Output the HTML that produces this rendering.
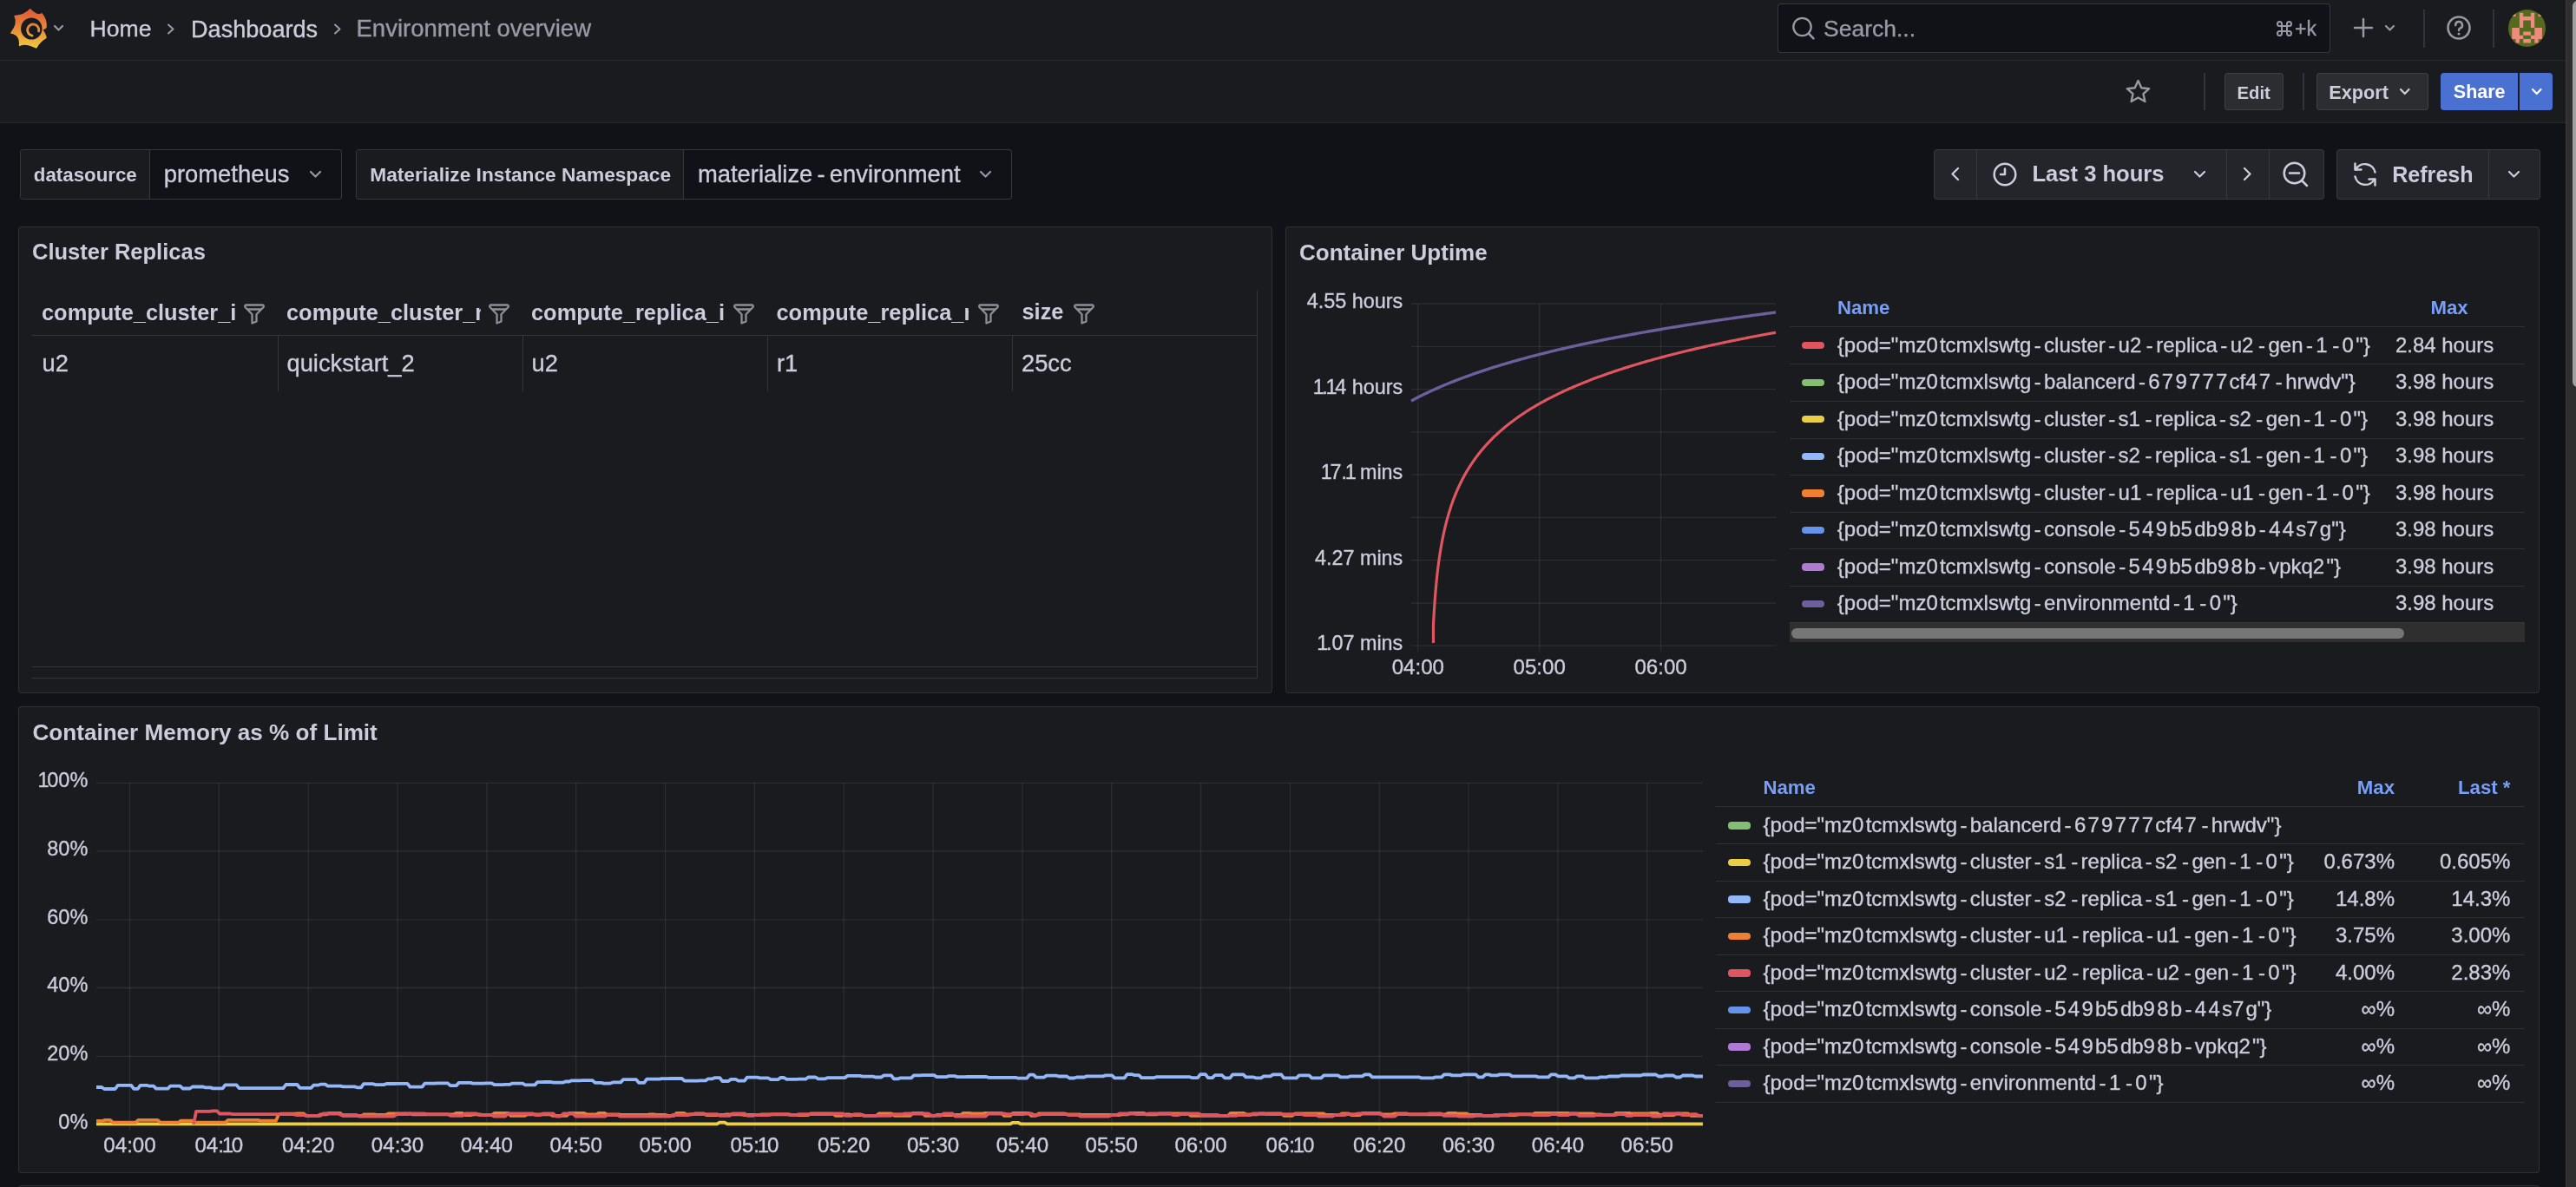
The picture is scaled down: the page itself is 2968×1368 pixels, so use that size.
<!DOCTYPE html>
<html><head><meta charset="utf-8"><title>Environment overview - Dashboards - Grafana</title>
<style>
html,body{margin:0;padding:0;width:2968px;height:1368px;overflow:hidden;background:#111217;font-family:"Liberation Sans",sans-serif;}
.r{-webkit-text-stroke:0.35px currentColor;}
</style></head><body>
<div style="position:absolute;left:0;top:0;width:2968px;height:1368px;overflow:hidden;will-change:transform;background:#111217">
<div style="position:absolute;left:0px;top:0px;width:2956px;height:69px;background:#191b1f"></div>
<div style="position:absolute;left:0px;top:69px;width:2956px;height:1px;background:rgba(204,204,220,0.12)"></div>
<div style="position:absolute;left:0px;top:70px;width:2956px;height:71px;background:#191b1f"></div>
<div style="position:absolute;left:0px;top:141px;width:2956px;height:1px;background:rgba(204,204,220,0.12)"></div>
<svg style="position:absolute;left:0px;top:0px;overflow:visible;" width="70" height="70" viewBox="0 0 70 70"><defs><linearGradient id="lg" gradientUnits="userSpaceOnUse" x1="0" y1="11" x2="0" y2="55"><stop offset="0" stop-color="#df5a37"/><stop offset="0.5" stop-color="#e78a3a"/><stop offset="1" stop-color="#f0c940"/></linearGradient></defs>
<path d="M34.8 10.8 Q42.80 19.30 48.00 15.80 Q53.90 23.15 53.00 31.50 L48.3 34.6 Q51.35 37.25 53.00 43.30 Q44.85 48.50 41.70 54.90 Q29.25 48.75 22.60 52.40 Q24.00 40.00 13.00 38.00 Q21.55 27.15 17.10 18.50 Q28.05 18.15 34.80 10.80 Z" fill="url(#lg)" stroke="url(#lg)" stroke-width="1.6" stroke-linejoin="round"/>
<ellipse cx="36.3" cy="33" rx="12.2" ry="12.6" fill="#191b1f"/>
<path d="M37.05 41.10 A6.6 6.6 0 1 1 44.70 35.75" fill="none" stroke="url(#lg)" stroke-width="2.9" stroke-linecap="round"/></svg>
<svg style="position:absolute;left:62.3px;top:29.25px;overflow:visible;" width="11" height="6.5" viewBox="0 0 11 6.5"><path d="M1 1 L5.5 5.5 L10 1" fill="none" stroke="#9899a6" stroke-width="2.2" stroke-linecap="round" stroke-linejoin="round"/></svg>
<div class="r" style="position:absolute;top:19.99px;font-size:26.6px;line-height:26.6px;color:#ccccdc;font-weight:normal;white-space:nowrap;left:103.50px">Home</div>
<svg style="position:absolute;left:192px;top:27px;overflow:visible;" width="10" height="13" viewBox="0 0 10 13"><path d="M2 1.5 L7.5 6.5 L2 11.5" fill="none" stroke="#9899a6" stroke-width="2" stroke-linecap="round" stroke-linejoin="round"/></svg>
<div class="r" style="position:absolute;top:19.57px;font-size:27.1px;line-height:27.1px;color:#ccccdc;font-weight:normal;white-space:nowrap;left:220.00px">Dashboards</div>
<svg style="position:absolute;left:384px;top:27px;overflow:visible;" width="10" height="13" viewBox="0 0 10 13"><path d="M2 1.5 L7.5 6.5 L2 11.5" fill="none" stroke="#9899a6" stroke-width="2" stroke-linecap="round" stroke-linejoin="round"/></svg>
<div class="r" style="position:absolute;top:19.23px;font-size:27.5px;line-height:27.5px;color:#9899a6;font-weight:normal;white-space:nowrap;left:410.50px">Environment overview</div>
<div style="position:absolute;left:2048px;top:4px;width:637px;height:57px;background:#111217;border:1px solid rgba(204,204,220,0.20);border-radius:4px;box-sizing:border-box"></div>
<svg style="position:absolute;left:2064px;top:19px;overflow:visible;" width="28" height="28" viewBox="0 0 28 28"><circle cx="12.5" cy="12" r="10.2" fill="none" stroke="#9899a6" stroke-width="2.3"/><path d="M19.8 19.5 L25.5 25.3" stroke="#9899a6" stroke-width="2.5" stroke-linecap="round"/></svg>
<div class="r" style="position:absolute;top:19.98px;font-size:26.5px;line-height:26.5px;color:#9899a6;font-weight:normal;white-space:nowrap;left:2101.00px">Search...</div>
<svg style="position:absolute;left:2623px;top:24px;overflow:visible;" width="18" height="18" viewBox="0 0 18 18"><g fill="none" stroke="#9899a6" stroke-width="2"><path d="M6 6 H12 V12 H6 Z"/><path d="M6 6 V3.5 A2.5 2.5 0 1 0 3.5 6 H6"/><path d="M12 6 V3.5 A2.5 2.5 0 1 1 14.5 6 H12"/><path d="M6 12 V14.5 A2.5 2.5 0 1 1 3.5 12 H6"/><path d="M12 12 V14.5 A2.5 2.5 0 1 0 14.5 12 H12"/></g></svg>
<div class="r" style="position:absolute;top:21.85px;font-size:23px;line-height:23px;color:#9899a6;font-weight:normal;white-space:nowrap;left:2644.00px">+k</div>
<svg style="position:absolute;left:2711px;top:20px;overflow:visible;" width="24" height="24" viewBox="0 0 24 24"><path d="M12 2 V22 M2 12 H22" stroke="#9899a6" stroke-width="2.5" stroke-linecap="round"/></svg>
<svg style="position:absolute;left:2748.0px;top:29.25px;overflow:visible;" width="11" height="6.5" viewBox="0 0 11 6.5"><path d="M1 1 L5.5 5.5 L10 1" fill="none" stroke="#9899a6" stroke-width="2.2" stroke-linecap="round" stroke-linejoin="round"/></svg>
<div style="position:absolute;left:2792px;top:11px;width:2px;height:44px;background:rgba(204,204,220,0.15)"></div>
<svg style="position:absolute;left:2819px;top:18px;overflow:visible;" width="28" height="28" viewBox="0 0 28 28"><circle cx="14" cy="14" r="12.5" fill="none" stroke="#9899a6" stroke-width="2.6"/><path d="M10.2 11.2 A3.9 3.9 0 1 1 15.4 14.6 C14.3 15.1 14 15.8 14 17" fill="none" stroke="#9899a6" stroke-width="2.5" stroke-linecap="round"/><circle cx="14" cy="21" r="1.5" fill="#9899a6"/></svg>
<div style="position:absolute;left:2872px;top:11px;width:2px;height:44px;background:rgba(204,204,220,0.15)"></div>
<svg style="position:absolute;left:2890px;top:11px;overflow:visible;" width="43" height="43" viewBox="0 0 43 43"><defs><clipPath id="av"><circle cx="21.5" cy="21.5" r="21.5"/></clipPath></defs><g clip-path="url(#av)"><rect width="43" height="43" fill="#55691f"/><path d="M4.20 3.70h4.34v4.34h-4.34ZM12.88 3.70h4.34v4.34h-4.34ZM25.90 3.70h4.34v4.34h-4.34ZM34.58 3.70h4.34v4.34h-4.34ZM12.88 8.04h4.34v4.34h-4.34ZM17.22 8.04h4.34v4.34h-4.34ZM21.56 8.04h4.34v4.34h-4.34ZM25.90 8.04h4.34v4.34h-4.34ZM12.88 12.38h4.34v4.34h-4.34ZM25.90 12.38h4.34v4.34h-4.34ZM12.88 16.72h4.34v4.34h-4.34ZM25.90 16.72h4.34v4.34h-4.34ZM4.20 21.06h4.34v4.34h-4.34ZM8.54 21.06h4.34v4.34h-4.34ZM30.24 21.06h4.34v4.34h-4.34ZM34.58 21.06h4.34v4.34h-4.34ZM4.20 25.40h4.34v4.34h-4.34ZM8.54 25.40h4.34v4.34h-4.34ZM17.22 25.40h4.34v4.34h-4.34ZM21.56 25.40h4.34v4.34h-4.34ZM30.24 25.40h4.34v4.34h-4.34ZM34.58 25.40h4.34v4.34h-4.34ZM4.20 29.74h4.34v4.34h-4.34ZM8.54 29.74h4.34v4.34h-4.34ZM12.88 29.74h4.34v4.34h-4.34ZM25.90 29.74h4.34v4.34h-4.34ZM30.24 29.74h4.34v4.34h-4.34ZM34.58 29.74h4.34v4.34h-4.34ZM8.54 34.08h4.34v4.34h-4.34ZM17.22 34.08h4.34v4.34h-4.34ZM21.56 34.08h4.34v4.34h-4.34ZM30.24 34.08h4.34v4.34h-4.34Z" fill="#eb8c7f"/></g></svg>
<svg style="position:absolute;left:2448px;top:90px;overflow:visible;" width="31" height="31" viewBox="0 0 31 31"><path d="M15.5 3 L19.3 11.3 L28.2 12.2 L21.5 18.2 L23.4 27 L15.5 22.5 L7.6 27 L9.5 18.2 L2.8 12.2 L11.7 11.3 Z" fill="none" stroke="#9899a6" stroke-width="2.4" stroke-linejoin="round"/></svg>
<div style="position:absolute;left:2539px;top:84px;width:2px;height:43px;background:rgba(204,204,220,0.15)"></div>
<div style="position:absolute;left:2563px;top:84px;width:68px;height:43px;background:rgba(204,204,220,0.10);border:1px solid rgba(204,204,220,0.12);border-radius:4px;box-sizing:border-box"></div>
<div style="position:absolute;top:96.75px;font-size:20.3px;line-height:20.3px;color:#ccccdc;font-weight:bold;white-space:nowrap;left:2577.50px">Edit</div>
<div style="position:absolute;left:2653px;top:84px;width:2px;height:43px;background:rgba(204,204,220,0.15)"></div>
<div style="position:absolute;left:2669px;top:84px;width:129px;height:43px;background:rgba(204,204,220,0.10);border:1px solid rgba(204,204,220,0.12);border-radius:4px;box-sizing:border-box"></div>
<div style="position:absolute;top:95.56px;font-size:21.7px;line-height:21.7px;color:#ccccdc;font-weight:bold;white-space:nowrap;left:2683.30px">Export</div>
<svg style="position:absolute;left:2764.75px;top:102.0px;overflow:visible;" width="11.5" height="7" viewBox="0 0 11.5 7"><path d="M1 1 L5.75 6 L10.5 1" fill="none" stroke="#ccccdc" stroke-width="2.2" stroke-linecap="round" stroke-linejoin="round"/></svg>
<div style="position:absolute;left:2812px;top:84px;width:129px;height:43px;background:#4a70d2;border-radius:4px"></div>
<div style="position:absolute;left:2901px;top:84px;width:2px;height:43px;background:#191b1f"></div>
<div style="position:absolute;top:95.72px;font-size:21.5px;line-height:21.5px;color:#ffffff;font-weight:bold;white-space:nowrap;left:2826.80px">Share</div>
<svg style="position:absolute;left:2916.95px;top:102.0px;overflow:visible;" width="11.5" height="7" viewBox="0 0 11.5 7"><path d="M1 1 L5.75 6 L10.5 1" fill="none" stroke="#ffffff" stroke-width="2.2" stroke-linecap="round" stroke-linejoin="round"/></svg>
<div style="position:absolute;left:23px;top:172px;width:371px;height:58px;background:#111217;border:1px solid rgba(204,204,220,0.20);border-radius:4px;box-sizing:border-box"></div>
<div style="position:absolute;left:24px;top:173px;width:148px;height:56px;background:#191b1f;border-radius:3px 0 0 3px"></div>
<div style="position:absolute;left:172px;top:173px;width:1px;height:56px;background:rgba(204,204,220,0.20)"></div>
<div style="position:absolute;top:190.54px;font-size:22.3px;line-height:22.3px;color:#ccccdc;font-weight:bold;white-space:nowrap;left:38.80px">datasource</div>
<div class="r" style="position:absolute;top:187.41px;font-size:27.4px;line-height:27.4px;color:#ccccdc;font-weight:normal;white-space:nowrap;left:188.70px">prometheus</div>
<svg style="position:absolute;left:357.1px;top:197.25px;overflow:visible;" width="13" height="7.5" viewBox="0 0 13 7.5"><path d="M1 1 L6.5 6.5 L12 1" fill="none" stroke="#9899a6" stroke-width="2.2" stroke-linecap="round" stroke-linejoin="round"/></svg>
<div style="position:absolute;left:410px;top:172px;width:756px;height:58px;background:#111217;border:1px solid rgba(204,204,220,0.20);border-radius:4px;box-sizing:border-box"></div>
<div style="position:absolute;left:411px;top:173px;width:376px;height:56px;background:#191b1f;border-radius:3px 0 0 3px"></div>
<div style="position:absolute;left:787px;top:173px;width:1px;height:56px;background:rgba(204,204,220,0.20)"></div>
<div style="position:absolute;top:190.21px;font-size:22.7px;line-height:22.7px;color:#ccccdc;font-weight:bold;white-space:nowrap;left:426.30px">Materialize Instance Namespace</div>
<div class="r" style="position:absolute;top:187.41px;font-size:27.4px;line-height:27.4px;color:#ccccdc;font-weight:normal;white-space:nowrap;left:803.90px">materialize<span style="margin:0 5.2px">-</span>environment</div>
<svg style="position:absolute;left:1128.8px;top:197.25px;overflow:visible;" width="13" height="7.5" viewBox="0 0 13 7.5"><path d="M1 1 L6.5 6.5 L12 1" fill="none" stroke="#9899a6" stroke-width="2.2" stroke-linecap="round" stroke-linejoin="round"/></svg>
<div style="position:absolute;left:2228px;top:172px;width:450px;height:58px;background:rgba(204,204,220,0.10);border:1px solid rgba(204,204,220,0.12);border-radius:4px;box-sizing:border-box"></div>
<div style="position:absolute;left:2277px;top:173px;width:1px;height:56px;background:rgba(204,204,220,0.12)"></div>
<div style="position:absolute;left:2565px;top:173px;width:1px;height:56px;background:rgba(204,204,220,0.12)"></div>
<div style="position:absolute;left:2614px;top:173px;width:1px;height:56px;background:rgba(204,204,220,0.12)"></div>
<svg style="position:absolute;left:2246px;top:192px;overflow:visible;" width="13" height="17" viewBox="0 0 13 17"><path d="M10 2 L3.5 8.5 L10 15" fill="none" stroke="#ccccdc" stroke-width="2.3" stroke-linecap="round" stroke-linejoin="round"/></svg>
<svg style="position:absolute;left:2294.5px;top:185.5px;overflow:visible;" width="30" height="30" viewBox="0 0 30 30"><circle cx="15" cy="15" r="12.3" fill="none" stroke="#ccccdc" stroke-width="2.5"/><path d="M15 8.5 V15 H10" fill="none" stroke="#ccccdc" stroke-width="2.5" stroke-linecap="round" stroke-linejoin="round"/></svg>
<div style="position:absolute;top:188.24px;font-size:25.6px;line-height:25.6px;color:#ccccdc;font-weight:bold;white-space:nowrap;left:2341.40px">Last 3 hours</div>
<svg style="position:absolute;left:2528.1px;top:196.95px;overflow:visible;" width="13" height="7.5" viewBox="0 0 13 7.5"><path d="M1 1 L6.5 6.5 L12 1" fill="none" stroke="#ccccdc" stroke-width="2.2" stroke-linecap="round" stroke-linejoin="round"/></svg>
<svg style="position:absolute;left:2583px;top:192px;overflow:visible;" width="13" height="17" viewBox="0 0 13 17"><path d="M3 2 L9.5 8.5 L3 15" fill="none" stroke="#ccccdc" stroke-width="2.3" stroke-linecap="round" stroke-linejoin="round"/></svg>
<svg style="position:absolute;left:2630px;top:185.5px;overflow:visible;" width="31" height="31" viewBox="0 0 31 31"><circle cx="13.5" cy="13.5" r="11.8" fill="none" stroke="#ccccdc" stroke-width="2.5"/><path d="M8 13.5 H19" stroke="#ccccdc" stroke-width="2.5" stroke-linecap="round"/><path d="M22 22 L28 28" stroke="#ccccdc" stroke-width="2.5" stroke-linecap="round"/></svg>
<div style="position:absolute;left:2692px;top:172px;width:235px;height:58px;background:rgba(204,204,220,0.10);border:1px solid rgba(204,204,220,0.12);border-radius:4px;box-sizing:border-box"></div>
<div style="position:absolute;left:2867px;top:173px;width:1px;height:56px;background:rgba(204,204,220,0.12)"></div>
<svg style="position:absolute;left:2709.5px;top:185.5px;overflow:visible;" width="30" height="30" viewBox="0 0 30 30"><g fill="none" stroke="#ccccdc" stroke-width="2.5" stroke-linecap="round" stroke-linejoin="round"><path d="M4.2 9.5 A12 12 0 0 1 26.5 12.5"/><path d="M25.8 20.5 A12 12 0 0 1 3.5 17.5"/><path d="M3.5 2.5 V9.5 H10.5"/><path d="M26.5 27.5 V20.5 H19.5"/></g></svg>
<div style="position:absolute;top:188.66px;font-size:25.1px;line-height:25.1px;color:#ccccdc;font-weight:bold;white-space:nowrap;left:2756.20px">Refresh</div>
<svg style="position:absolute;left:2890.0px;top:196.95px;overflow:visible;" width="13" height="7.5" viewBox="0 0 13 7.5"><path d="M1 1 L6.5 6.5 L12 1" fill="none" stroke="#ccccdc" stroke-width="2.2" stroke-linecap="round" stroke-linejoin="round"/></svg>
<div style="position:absolute;left:21px;top:261px;width:1445px;height:538px;background:#191b1f;border:1px solid rgba(204,204,220,0.12);border-radius:4px;box-sizing:border-box"></div>
<div style="position:absolute;left:1481px;top:261px;width:1445px;height:538px;background:#191b1f;border:1px solid rgba(204,204,220,0.12);border-radius:4px;box-sizing:border-box"></div>
<div style="position:absolute;left:21px;top:814px;width:2905px;height:538px;background:#191b1f;border:1px solid rgba(204,204,220,0.12);border-radius:4px;box-sizing:border-box"></div>
<div style="position:absolute;left:21px;top:1366px;width:2905px;height:54px;background:#191b1f;border:1px solid rgba(204,204,220,0.12);border-radius:4px;box-sizing:border-box"></div>
<div style="position:absolute;left:2956px;top:0px;width:12px;height:1368px;background:#2f2f2f;border-left:1px solid #3a3a3a;box-sizing:border-box"></div>
<div style="position:absolute;left:2964px;top:1px;width:12px;height:445px;background:#a0a0a0;border-radius:6px"></div>
<div style="position:absolute;top:278.32px;font-size:25.5px;line-height:25.5px;color:#ccccdc;font-weight:bold;white-space:nowrap;left:37.00px">Cluster Replicas</div>
<div style="position:absolute;left:37px;top:386px;width:1411px;height:1px;background:#34353a"></div>
<div style="position:absolute;left:1448px;top:335px;width:1px;height:447px;background:#34353a"></div>
<div style="position:absolute;left:37px;top:768px;width:1411px;height:1px;background:#34353a"></div>
<div style="position:absolute;left:37px;top:781px;width:1412px;height:1px;background:#34353a"></div>
<div style="position:absolute;left:48.0px;top:345.11px;width:240px;overflow:hidden;font-size:25.4px;line-height:30px;font-weight:bold;color:#ccccdc;white-space:nowrap">compute_cluster_i</div>
<svg style="position:absolute;left:279.5px;top:348.3px;overflow:visible;" width="26" height="26" viewBox="0 0 26 26"><path d="M3.5 3.5 H22.5 A1.5 1.5 0 0 1 23.5 6 L15.5 14.2 V22.5 L10.5 24.5 V14.2 L2.5 6 A1.5 1.5 0 0 1 3.5 3.5 Z M4.5 8.5 H21.5" fill="none" stroke="#8e8e99" stroke-width="2.3" stroke-linejoin="round"/></svg>
<div class="r" style="position:absolute;top:405.19px;font-size:27.3px;line-height:27.3px;color:#ccccdc;font-weight:normal;white-space:nowrap;left:48.50px">u2</div>
<div style="position:absolute;left:330.0px;top:345.11px;width:223.5px;overflow:hidden;font-size:25.4px;line-height:30px;font-weight:bold;color:#ccccdc;white-space:nowrap">compute_cluster_n</div>
<svg style="position:absolute;left:561.5px;top:348.3px;overflow:visible;" width="26" height="26" viewBox="0 0 26 26"><path d="M3.5 3.5 H22.5 A1.5 1.5 0 0 1 23.5 6 L15.5 14.2 V22.5 L10.5 24.5 V14.2 L2.5 6 A1.5 1.5 0 0 1 3.5 3.5 Z M4.5 8.5 H21.5" fill="none" stroke="#8e8e99" stroke-width="2.3" stroke-linejoin="round"/></svg>
<div style="position:absolute;left:319.5px;top:387px;width:1px;height:64px;background:#34353a"></div>
<div class="r" style="position:absolute;top:405.19px;font-size:27.3px;line-height:27.3px;color:#ccccdc;font-weight:normal;white-space:nowrap;left:330.50px">quickstart_2</div>
<div style="position:absolute;left:612.0px;top:345.11px;width:240px;overflow:hidden;font-size:25.4px;line-height:30px;font-weight:bold;color:#ccccdc;white-space:nowrap">compute_replica_i</div>
<svg style="position:absolute;left:844px;top:348.3px;overflow:visible;" width="26" height="26" viewBox="0 0 26 26"><path d="M3.5 3.5 H22.5 A1.5 1.5 0 0 1 23.5 6 L15.5 14.2 V22.5 L10.5 24.5 V14.2 L2.5 6 A1.5 1.5 0 0 1 3.5 3.5 Z M4.5 8.5 H21.5" fill="none" stroke="#8e8e99" stroke-width="2.3" stroke-linejoin="round"/></svg>
<div style="position:absolute;left:601.5px;top:387px;width:1px;height:64px;background:#34353a"></div>
<div class="r" style="position:absolute;top:405.19px;font-size:27.3px;line-height:27.3px;color:#ccccdc;font-weight:normal;white-space:nowrap;left:612.50px">u2</div>
<div style="position:absolute;left:894.5px;top:345.11px;width:221.5px;overflow:hidden;font-size:25.4px;line-height:30px;font-weight:bold;color:#ccccdc;white-space:nowrap">compute_replica_n</div>
<svg style="position:absolute;left:1126px;top:348.3px;overflow:visible;" width="26" height="26" viewBox="0 0 26 26"><path d="M3.5 3.5 H22.5 A1.5 1.5 0 0 1 23.5 6 L15.5 14.2 V22.5 L10.5 24.5 V14.2 L2.5 6 A1.5 1.5 0 0 1 3.5 3.5 Z M4.5 8.5 H21.5" fill="none" stroke="#8e8e99" stroke-width="2.3" stroke-linejoin="round"/></svg>
<div style="position:absolute;left:884px;top:387px;width:1px;height:64px;background:#34353a"></div>
<div class="r" style="position:absolute;top:405.19px;font-size:27.3px;line-height:27.3px;color:#ccccdc;font-weight:normal;white-space:nowrap;left:895.00px">r1</div>
<div style="position:absolute;top:347.41px;font-size:25.4px;line-height:25.4px;color:#ccccdc;font-weight:bold;white-space:nowrap;left:1177.50px">size</div>
<svg style="position:absolute;left:1236px;top:348.3px;overflow:visible;" width="26" height="26" viewBox="0 0 26 26"><path d="M3.5 3.5 H22.5 A1.5 1.5 0 0 1 23.5 6 L15.5 14.2 V22.5 L10.5 24.5 V14.2 L2.5 6 A1.5 1.5 0 0 1 3.5 3.5 Z M4.5 8.5 H21.5" fill="none" stroke="#8e8e99" stroke-width="2.3" stroke-linejoin="round"/></svg>
<div style="position:absolute;left:1166px;top:387px;width:1px;height:64px;background:#34353a"></div>
<div class="r" style="position:absolute;top:405.19px;font-size:27.3px;line-height:27.3px;color:#ccccdc;font-weight:normal;white-space:nowrap;left:1177.00px">25cc</div>
<div style="position:absolute;top:277.90px;font-size:26px;line-height:26px;color:#ccccdc;font-weight:bold;white-space:nowrap;left:1497.00px">Container Uptime</div>
<svg style="position:absolute;left:0px;top:0px;overflow:visible;pointer-events:none" width="2968" height="1368" viewBox="0 0 2968 1368"><path d="M1626 350.0 H2046" stroke="rgba(204,204,220,0.10)" stroke-width="1.3"/><path d="M1626 399.3 H2046" stroke="rgba(204,204,220,0.10)" stroke-width="1.3"/><path d="M1626 448.6 H2046" stroke="rgba(204,204,220,0.10)" stroke-width="1.3"/><path d="M1626 497.8 H2046" stroke="rgba(204,204,220,0.10)" stroke-width="1.3"/><path d="M1626 547.1 H2046" stroke="rgba(204,204,220,0.10)" stroke-width="1.3"/><path d="M1626 596.4 H2046" stroke="rgba(204,204,220,0.10)" stroke-width="1.3"/><path d="M1626 645.7 H2046" stroke="rgba(204,204,220,0.10)" stroke-width="1.3"/><path d="M1626 695.0 H2046" stroke="rgba(204,204,220,0.10)" stroke-width="1.3"/><path d="M1626 744.2 H2046" stroke="rgba(204,204,220,0.10)" stroke-width="1.3"/><path d="M1633.8 350 V751" stroke="rgba(204,204,220,0.10)" stroke-width="1.3"/><path d="M1773.7 350 V751" stroke="rgba(204,204,220,0.10)" stroke-width="1.3"/><path d="M1913.6 350 V751" stroke="rgba(204,204,220,0.10)" stroke-width="1.3"/><polyline points="1651.5,741 1651.5,720.15 1652.0,710.65 1652.5,702.27 1653.0,694.77 1653.5,687.98 1654.0,681.79 1654.5,676.09 1655.0,670.82 1655.5,665.91 1656.0,661.31 1656.5,657.00 1657.0,652.93 1657.5,649.08 1658.0,645.43 1658.5,641.96 1659.0,638.64 1659.5,635.48 1660.0,632.45 1660.5,629.55 1661.0,626.75 1661.5,624.07 1662.0,621.48 1662.5,618.98 1663.0,616.57 1663.5,614.23 1664.0,611.97 1664.5,609.78 1665.0,607.66 1665.5,605.60 1666.0,603.59 1666.5,601.64 1667.0,599.74 1667.5,597.89 1668.0,596.09 1668.5,594.33 1669.0,592.62 1669.5,590.94 1670.0,589.31 1670.5,587.71 1671.0,586.14 1671.5,584.61 1672.0,583.11 1672.5,581.65 1673.0,580.21 1673.5,578.80 1674.0,577.42 1674.5,576.06 1675.0,574.73 1675.5,573.42 1676.0,572.14 1676.5,570.88 1677.0,569.64 1677.5,568.43 1678.0,567.23 1678.5,566.05 1679.0,564.90 1679.5,563.76 1680.0,562.64 1680.5,561.53 1681.0,560.45 1681.5,559.37 1682.0,558.32 1682.5,557.28 1683.0,556.26 1683.5,555.25 1684.0,554.25 1684.5,553.27 1685.0,552.30 1685.5,551.35 1686.0,550.40 1686.5,549.47 1687.0,548.55 1687.5,547.65 1688.0,546.75 1688.5,545.87 1689.0,544.99 1689.5,544.13 1690.0,543.28 1690.5,542.44 1691.0,541.60 1691.5,540.78 1692.0,539.97 1692.5,539.16 1693.0,538.37 1693.5,537.58 1694.0,536.80 1694.5,536.03 1695.0,535.27 1695.5,534.52 1696.0,533.77 1696.5,533.04 1697.0,532.31 1697.5,531.58 1698.0,530.87 1698.5,530.16 1699.0,529.46 1699.5,528.76 1700.0,528.08 1702.0,525.39 1704.0,522.80 1706.0,520.30 1708.0,517.89 1710.0,515.56 1712.0,513.30 1714.0,511.11 1716.0,508.98 1718.0,506.92 1720.0,504.91 1722.0,502.96 1724.0,501.07 1726.0,499.22 1728.0,497.41 1730.0,495.66 1732.0,493.94 1734.0,492.27 1736.0,490.63 1738.0,489.03 1740.0,487.47 1742.0,485.93 1744.0,484.44 1746.0,482.97 1748.0,481.53 1750.0,480.12 1752.0,478.74 1754.0,477.38 1756.0,476.05 1758.0,474.75 1760.0,473.46 1762.0,472.20 1764.0,470.97 1766.0,469.75 1768.0,468.55 1770.0,467.38 1772.0,466.22 1774.0,465.08 1776.0,463.96 1778.0,462.86 1780.0,461.77 1782.0,460.70 1784.0,459.64 1786.0,458.60 1788.0,457.58 1790.0,456.57 1792.0,455.58 1794.0,454.59 1796.0,453.63 1798.0,452.67 1800.0,451.73 1802.0,450.80 1804.0,449.88 1806.0,448.97 1808.0,448.08 1810.0,447.19 1812.0,446.32 1814.0,445.46 1816.0,444.60 1818.0,443.76 1820.0,442.93 1822.0,442.11 1824.0,441.29 1826.0,440.49 1828.0,439.69 1830.0,438.91 1832.0,438.13 1834.0,437.36 1836.0,436.60 1838.0,435.84 1840.0,435.10 1842.0,434.36 1844.0,433.63 1846.0,432.91 1848.0,432.19 1850.0,431.48 1852.0,430.78 1854.0,430.09 1856.0,429.40 1858.0,428.72 1860.0,428.04 1862.0,427.38 1864.0,426.71 1866.0,426.06 1868.0,425.41 1870.0,424.76 1872.0,424.13 1874.0,423.49 1876.0,422.87 1878.0,422.24 1880.0,421.63 1882.0,421.02 1884.0,420.41 1886.0,419.81 1888.0,419.21 1890.0,418.62 1892.0,418.04 1894.0,417.46 1896.0,416.88 1898.0,416.31 1900.0,415.74 1902.0,415.18 1904.0,414.62 1906.0,414.07 1908.0,413.52 1910.0,412.97 1912.0,412.43 1914.0,411.89 1916.0,411.36 1918.0,410.83 1920.0,410.31 1922.0,409.78 1924.0,409.27 1926.0,408.75 1928.0,408.24 1930.0,407.74 1932.0,407.23 1934.0,406.73 1936.0,406.24 1938.0,405.74 1940.0,405.26 1942.0,404.77 1944.0,404.29 1946.0,403.81 1948.0,403.33 1950.0,402.86 1952.0,402.39 1954.0,401.92 1956.0,401.46 1958.0,401.00 1960.0,400.54 1962.0,400.08 1964.0,399.63 1966.0,399.18 1968.0,398.74 1970.0,398.29 1972.0,397.85 1974.0,397.42 1976.0,396.98 1978.0,396.55 1980.0,396.12 1982.0,395.69 1984.0,395.26 1986.0,394.84 1988.0,394.42 1990.0,394.00 1992.0,393.59 1994.0,393.18 1996.0,392.77 1998.0,392.36 2000.0,391.95 2002.0,391.55 2004.0,391.15 2006.0,390.75 2008.0,390.35 2010.0,389.96 2012.0,389.57 2014.0,389.18 2016.0,388.79 2018.0,388.40 2020.0,388.02 2022.0,387.64 2024.0,387.26 2026.0,386.88 2028.0,386.51 2030.0,386.13 2032.0,385.76 2034.0,385.39 2036.0,385.02 2038.0,384.66 2040.0,384.29 2042.0,383.93 2044.0,383.57 2046.0,383.21" fill="none" stroke="#e05660" stroke-width="3.2" stroke-linejoin="round"/><polyline points="1626.0,461.98 1629.0,460.38 1632.0,458.81 1635.0,457.28 1638.0,455.77 1641.0,454.30 1644.0,452.86 1647.0,451.45 1650.0,450.06 1653.0,448.70 1656.0,447.37 1659.0,446.06 1662.0,444.77 1665.0,443.51 1668.0,442.27 1671.0,441.05 1674.0,439.85 1677.0,438.67 1680.0,437.51 1683.0,436.37 1686.0,435.25 1689.0,434.14 1692.0,433.05 1695.0,431.98 1698.0,430.92 1701.0,429.88 1704.0,428.86 1707.0,427.84 1710.0,426.85 1713.0,425.86 1716.0,424.89 1719.0,423.94 1722.0,422.99 1725.0,422.06 1728.0,421.14 1731.0,420.23 1734.0,419.33 1737.0,418.45 1740.0,417.57 1743.0,416.71 1746.0,415.85 1749.0,415.01 1752.0,414.18 1755.0,413.35 1758.0,412.54 1761.0,411.73 1764.0,410.94 1767.0,410.15 1770.0,409.37 1773.0,408.60 1776.0,407.84 1779.0,407.08 1782.0,406.34 1785.0,405.60 1788.0,404.87 1791.0,404.14 1794.0,403.43 1797.0,402.72 1800.0,402.01 1803.0,401.32 1806.0,400.63 1809.0,399.95 1812.0,399.27 1815.0,398.60 1818.0,397.94 1821.0,397.28 1824.0,396.63 1827.0,395.99 1830.0,395.35 1833.0,394.72 1836.0,394.09 1839.0,393.47 1842.0,392.85 1845.0,392.24 1848.0,391.63 1851.0,391.03 1854.0,390.43 1857.0,389.84 1860.0,389.25 1863.0,388.67 1866.0,388.10 1869.0,387.52 1872.0,386.96 1875.0,386.39 1878.0,385.83 1881.0,385.28 1884.0,384.73 1887.0,384.18 1890.0,383.64 1893.0,383.10 1896.0,382.57 1899.0,382.04 1902.0,381.51 1905.0,380.99 1908.0,380.47 1911.0,379.96 1914.0,379.45 1917.0,378.94 1920.0,378.44 1923.0,377.94 1926.0,377.44 1929.0,376.95 1932.0,376.46 1935.0,375.97 1938.0,375.49 1941.0,375.01 1944.0,374.53 1947.0,374.06 1950.0,373.59 1953.0,373.12 1956.0,372.66 1959.0,372.20 1962.0,371.74 1965.0,371.28 1968.0,370.83 1971.0,370.38 1974.0,369.94 1977.0,369.49 1980.0,369.05 1983.0,368.61 1986.0,368.18 1989.0,367.74 1992.0,367.31 1995.0,366.89 1998.0,366.46 2001.0,366.04 2004.0,365.62 2007.0,365.20 2010.0,364.78 2013.0,364.37 2016.0,363.96 2019.0,363.55 2022.0,363.15 2025.0,362.74 2028.0,362.34 2031.0,361.94 2034.0,361.55 2037.0,361.15 2040.0,360.76 2043.0,360.37 2046.0,359.98" fill="none" stroke="#6d5e9c" stroke-width="3.4" stroke-linejoin="round"/></svg>
<div class="r" style="position:absolute;top:336.11px;font-size:23.4px;line-height:23.4px;color:#ccccdc;font-weight:normal;white-space:nowrap;right:1351.70px;text-align:right">4.55 hours</div>
<div class="r" style="position:absolute;top:434.67px;font-size:23.4px;line-height:23.4px;color:#ccccdc;font-weight:normal;white-space:nowrap;right:1351.70px;text-align:right"><span style="margin:0 -2.3px">1</span>.<span style="margin:0 -2.3px">1</span>4 hours</div>
<div class="r" style="position:absolute;top:533.23px;font-size:23.4px;line-height:23.4px;color:#ccccdc;font-weight:normal;white-space:nowrap;right:1351.70px;text-align:right"><span style="margin:0 -2.3px">1</span>7.<span style="margin:0 -2.3px">1</span> mins</div>
<div class="r" style="position:absolute;top:631.79px;font-size:23.4px;line-height:23.4px;color:#ccccdc;font-weight:normal;white-space:nowrap;right:1351.70px;text-align:right">4.27 mins</div>
<div class="r" style="position:absolute;top:730.35px;font-size:23.4px;line-height:23.4px;color:#ccccdc;font-weight:normal;white-space:nowrap;right:1351.70px;text-align:right"><span style="margin:0 -2.3px">1</span>.07 mins</div>
<div class="r" style="position:absolute;top:756.51px;font-size:24.1px;line-height:24.1px;color:#ccccdc;font-weight:normal;white-space:nowrap;left:1233.80px;width:800px;text-align:center">04:00</div>
<div class="r" style="position:absolute;top:756.51px;font-size:24.1px;line-height:24.1px;color:#ccccdc;font-weight:normal;white-space:nowrap;left:1373.70px;width:800px;text-align:center">05:00</div>
<div class="r" style="position:absolute;top:756.51px;font-size:24.1px;line-height:24.1px;color:#ccccdc;font-weight:normal;white-space:nowrap;left:1513.60px;width:800px;text-align:center">06:00</div>
<div style="position:absolute;top:344.33px;font-size:22.2px;line-height:22.2px;color:#799ef8;font-weight:bold;white-space:nowrap;left:2117.00px">Name</div>
<div style="position:absolute;top:344.33px;font-size:22.2px;line-height:22.2px;color:#799ef8;font-weight:bold;white-space:nowrap;right:124.40px;text-align:right">Max</div>
<div style="position:absolute;left:2062px;top:376px;width:847px;height:1px;background:rgba(204,204,220,0.12)"></div>
<div style="position:absolute;left:2076px;top:394.0px;width:26px;height:8.4px;background:#e05660;border-radius:4px"></div>
<div class="r" style="position:absolute;top:385.60px;font-size:24px;line-height:24px;color:#ccccdc;font-weight:normal;white-space:nowrap;left:2116.80px">{pod="mz<span style="letter-spacing:2.2px">0</span>tcmxlswtg<span style="margin:0 3.4px">-</span>cluster<span style="margin:0 3.4px">-</span>u<span style="letter-spacing:2.2px">2</span><span style="margin:0 3.4px">-</span>replica<span style="margin:0 3.4px">-</span>u<span style="letter-spacing:2.2px">2</span><span style="margin:0 3.4px">-</span>gen<span style="margin:0 3.4px">-</span><span style="letter-spacing:2.2px">1</span><span style="margin:0 3.4px">-</span><span style="letter-spacing:2.2px">0</span>"}</div>
<div class="r" style="position:absolute;top:385.60px;font-size:24px;line-height:24px;color:#ccccdc;font-weight:normal;white-space:nowrap;right:94.70px;text-align:right">2.84 hours</div>
<div style="position:absolute;left:2062px;top:419.4px;width:847px;height:1px;background:rgba(204,204,220,0.12)"></div>
<div style="position:absolute;left:2076px;top:436.55px;width:26px;height:8.4px;background:#85bd72;border-radius:4px"></div>
<div class="r" style="position:absolute;top:428.15px;font-size:24px;line-height:24px;color:#ccccdc;font-weight:normal;white-space:nowrap;left:2116.80px">{pod="mz<span style="letter-spacing:2.2px">0</span>tcmxlswtg<span style="margin:0 3.4px">-</span>balancerd<span style="margin:0 3.4px">-</span><span style="letter-spacing:2.2px">679777</span>cf<span style="letter-spacing:2.2px">47</span><span style="margin:0 3.4px">-</span>hrwdv"}</div>
<div class="r" style="position:absolute;top:428.15px;font-size:24px;line-height:24px;color:#ccccdc;font-weight:normal;white-space:nowrap;right:94.70px;text-align:right">3.98 hours</div>
<div style="position:absolute;left:2062px;top:461.95px;width:847px;height:1px;background:rgba(204,204,220,0.12)"></div>
<div style="position:absolute;left:2076px;top:479.1px;width:26px;height:8.4px;background:#eccd47;border-radius:4px"></div>
<div class="r" style="position:absolute;top:470.70px;font-size:24px;line-height:24px;color:#ccccdc;font-weight:normal;white-space:nowrap;left:2116.80px">{pod="mz<span style="letter-spacing:2.2px">0</span>tcmxlswtg<span style="margin:0 3.4px">-</span>cluster<span style="margin:0 3.4px">-</span>s<span style="letter-spacing:2.2px">1</span><span style="margin:0 3.4px">-</span>replica<span style="margin:0 3.4px">-</span>s<span style="letter-spacing:2.2px">2</span><span style="margin:0 3.4px">-</span>gen<span style="margin:0 3.4px">-</span><span style="letter-spacing:2.2px">1</span><span style="margin:0 3.4px">-</span><span style="letter-spacing:2.2px">0</span>"}</div>
<div class="r" style="position:absolute;top:470.70px;font-size:24px;line-height:24px;color:#ccccdc;font-weight:normal;white-space:nowrap;right:94.70px;text-align:right">3.98 hours</div>
<div style="position:absolute;left:2062px;top:504.5px;width:847px;height:1px;background:rgba(204,204,220,0.12)"></div>
<div style="position:absolute;left:2076px;top:521.65px;width:26px;height:8.4px;background:#94b7f9;border-radius:4px"></div>
<div class="r" style="position:absolute;top:513.25px;font-size:24px;line-height:24px;color:#ccccdc;font-weight:normal;white-space:nowrap;left:2116.80px">{pod="mz<span style="letter-spacing:2.2px">0</span>tcmxlswtg<span style="margin:0 3.4px">-</span>cluster<span style="margin:0 3.4px">-</span>s<span style="letter-spacing:2.2px">2</span><span style="margin:0 3.4px">-</span>replica<span style="margin:0 3.4px">-</span>s<span style="letter-spacing:2.2px">1</span><span style="margin:0 3.4px">-</span>gen<span style="margin:0 3.4px">-</span><span style="letter-spacing:2.2px">1</span><span style="margin:0 3.4px">-</span><span style="letter-spacing:2.2px">0</span>"}</div>
<div class="r" style="position:absolute;top:513.25px;font-size:24px;line-height:24px;color:#ccccdc;font-weight:normal;white-space:nowrap;right:94.70px;text-align:right">3.98 hours</div>
<div style="position:absolute;left:2062px;top:547.05px;width:847px;height:1px;background:rgba(204,204,220,0.12)"></div>
<div style="position:absolute;left:2076px;top:564.2px;width:26px;height:8.4px;background:#ee8033;border-radius:4px"></div>
<div class="r" style="position:absolute;top:555.80px;font-size:24px;line-height:24px;color:#ccccdc;font-weight:normal;white-space:nowrap;left:2116.80px">{pod="mz<span style="letter-spacing:2.2px">0</span>tcmxlswtg<span style="margin:0 3.4px">-</span>cluster<span style="margin:0 3.4px">-</span>u<span style="letter-spacing:2.2px">1</span><span style="margin:0 3.4px">-</span>replica<span style="margin:0 3.4px">-</span>u<span style="letter-spacing:2.2px">1</span><span style="margin:0 3.4px">-</span>gen<span style="margin:0 3.4px">-</span><span style="letter-spacing:2.2px">1</span><span style="margin:0 3.4px">-</span><span style="letter-spacing:2.2px">0</span>"}</div>
<div class="r" style="position:absolute;top:555.80px;font-size:24px;line-height:24px;color:#ccccdc;font-weight:normal;white-space:nowrap;right:94.70px;text-align:right">3.98 hours</div>
<div style="position:absolute;left:2062px;top:589.6px;width:847px;height:1px;background:rgba(204,204,220,0.12)"></div>
<div style="position:absolute;left:2076px;top:606.75px;width:26px;height:8.4px;background:#6592eb;border-radius:4px"></div>
<div class="r" style="position:absolute;top:598.35px;font-size:24px;line-height:24px;color:#ccccdc;font-weight:normal;white-space:nowrap;left:2116.80px">{pod="mz<span style="letter-spacing:2.2px">0</span>tcmxlswtg<span style="margin:0 3.4px">-</span>console<span style="margin:0 3.4px">-</span><span style="letter-spacing:2.2px">549</span>b<span style="letter-spacing:2.2px">5</span>db<span style="letter-spacing:2.2px">98</span>b<span style="margin:0 3.4px">-</span><span style="letter-spacing:2.2px">44</span>s<span style="letter-spacing:2.2px">7</span>g"}</div>
<div class="r" style="position:absolute;top:598.35px;font-size:24px;line-height:24px;color:#ccccdc;font-weight:normal;white-space:nowrap;right:94.70px;text-align:right">3.98 hours</div>
<div style="position:absolute;left:2062px;top:632.15px;width:847px;height:1px;background:rgba(204,204,220,0.12)"></div>
<div style="position:absolute;left:2076px;top:649.3px;width:26px;height:8.4px;background:#af7ad3;border-radius:4px"></div>
<div class="r" style="position:absolute;top:640.90px;font-size:24px;line-height:24px;color:#ccccdc;font-weight:normal;white-space:nowrap;left:2116.80px">{pod="mz<span style="letter-spacing:2.2px">0</span>tcmxlswtg<span style="margin:0 3.4px">-</span>console<span style="margin:0 3.4px">-</span><span style="letter-spacing:2.2px">549</span>b<span style="letter-spacing:2.2px">5</span>db<span style="letter-spacing:2.2px">98</span>b<span style="margin:0 3.4px">-</span>vpkq<span style="letter-spacing:2.2px">2</span>"}</div>
<div class="r" style="position:absolute;top:640.90px;font-size:24px;line-height:24px;color:#ccccdc;font-weight:normal;white-space:nowrap;right:94.70px;text-align:right">3.98 hours</div>
<div style="position:absolute;left:2062px;top:674.6999999999999px;width:847px;height:1px;background:rgba(204,204,220,0.12)"></div>
<div style="position:absolute;left:2076px;top:691.8499999999999px;width:26px;height:8.4px;background:#6d5e9c;border-radius:4px"></div>
<div class="r" style="position:absolute;top:683.45px;font-size:24px;line-height:24px;color:#ccccdc;font-weight:normal;white-space:nowrap;left:2116.80px">{pod="mz<span style="letter-spacing:2.2px">0</span>tcmxlswtg<span style="margin:0 3.4px">-</span>environmentd<span style="margin:0 3.4px">-</span><span style="letter-spacing:2.2px">1</span><span style="margin:0 3.4px">-</span><span style="letter-spacing:2.2px">0</span>"}</div>
<div class="r" style="position:absolute;top:683.45px;font-size:24px;line-height:24px;color:#ccccdc;font-weight:normal;white-space:nowrap;right:94.70px;text-align:right">3.98 hours</div>
<div style="position:absolute;left:2062px;top:717px;width:847px;height:23px;background:#2f2f2f;border-top:1px solid #363636;box-sizing:border-box"></div>
<div style="position:absolute;left:2064px;top:724px;width:706px;height:12px;background:#767676;border-radius:6px"></div>
<div style="position:absolute;top:830.52px;font-size:26.1px;line-height:26.1px;color:#ccccdc;font-weight:bold;white-space:nowrap;left:37.50px">Container Memory as % of Limit</div>
<div class="r" style="position:absolute;top:888.12px;font-size:23.5px;line-height:23.5px;color:#ccccdc;font-weight:normal;white-space:nowrap;right:2866.70px;text-align:right"><span style="margin:0 -2.2px">1</span>00%</div>
<div class="r" style="position:absolute;top:966.86px;font-size:23.5px;line-height:23.5px;color:#ccccdc;font-weight:normal;white-space:nowrap;right:2866.70px;text-align:right">80%</div>
<div class="r" style="position:absolute;top:1045.61px;font-size:23.5px;line-height:23.5px;color:#ccccdc;font-weight:normal;white-space:nowrap;right:2866.70px;text-align:right">60%</div>
<div class="r" style="position:absolute;top:1124.35px;font-size:23.5px;line-height:23.5px;color:#ccccdc;font-weight:normal;white-space:nowrap;right:2866.70px;text-align:right">40%</div>
<div class="r" style="position:absolute;top:1203.09px;font-size:23.5px;line-height:23.5px;color:#ccccdc;font-weight:normal;white-space:nowrap;right:2866.70px;text-align:right">20%</div>
<div class="r" style="position:absolute;top:1281.83px;font-size:23.5px;line-height:23.5px;color:#ccccdc;font-weight:normal;white-space:nowrap;right:2866.70px;text-align:right">0%</div>
<div class="r" style="position:absolute;top:1308.42px;font-size:24.1px;line-height:24.1px;color:#ccccdc;font-weight:normal;white-space:nowrap;left:-250.50px;width:800px;text-align:center">04:00</div>
<div class="r" style="position:absolute;top:1308.42px;font-size:24.1px;line-height:24.1px;color:#ccccdc;font-weight:normal;white-space:nowrap;left:-147.66px;width:800px;text-align:center">04:<span style="margin:0 -2.25px">1</span>0</div>
<div class="r" style="position:absolute;top:1308.42px;font-size:24.1px;line-height:24.1px;color:#ccccdc;font-weight:normal;white-space:nowrap;left:-44.82px;width:800px;text-align:center">04:20</div>
<div class="r" style="position:absolute;top:1308.42px;font-size:24.1px;line-height:24.1px;color:#ccccdc;font-weight:normal;white-space:nowrap;left:58.02px;width:800px;text-align:center">04:30</div>
<div class="r" style="position:absolute;top:1308.42px;font-size:24.1px;line-height:24.1px;color:#ccccdc;font-weight:normal;white-space:nowrap;left:160.86px;width:800px;text-align:center">04:40</div>
<div class="r" style="position:absolute;top:1308.42px;font-size:24.1px;line-height:24.1px;color:#ccccdc;font-weight:normal;white-space:nowrap;left:263.70px;width:800px;text-align:center">04:50</div>
<div class="r" style="position:absolute;top:1308.42px;font-size:24.1px;line-height:24.1px;color:#ccccdc;font-weight:normal;white-space:nowrap;left:366.54px;width:800px;text-align:center">05:00</div>
<div class="r" style="position:absolute;top:1308.42px;font-size:24.1px;line-height:24.1px;color:#ccccdc;font-weight:normal;white-space:nowrap;left:469.38px;width:800px;text-align:center">05:<span style="margin:0 -2.25px">1</span>0</div>
<div class="r" style="position:absolute;top:1308.42px;font-size:24.1px;line-height:24.1px;color:#ccccdc;font-weight:normal;white-space:nowrap;left:572.22px;width:800px;text-align:center">05:20</div>
<div class="r" style="position:absolute;top:1308.42px;font-size:24.1px;line-height:24.1px;color:#ccccdc;font-weight:normal;white-space:nowrap;left:675.06px;width:800px;text-align:center">05:30</div>
<div class="r" style="position:absolute;top:1308.42px;font-size:24.1px;line-height:24.1px;color:#ccccdc;font-weight:normal;white-space:nowrap;left:777.90px;width:800px;text-align:center">05:40</div>
<div class="r" style="position:absolute;top:1308.42px;font-size:24.1px;line-height:24.1px;color:#ccccdc;font-weight:normal;white-space:nowrap;left:880.74px;width:800px;text-align:center">05:50</div>
<div class="r" style="position:absolute;top:1308.42px;font-size:24.1px;line-height:24.1px;color:#ccccdc;font-weight:normal;white-space:nowrap;left:983.58px;width:800px;text-align:center">06:00</div>
<div class="r" style="position:absolute;top:1308.42px;font-size:24.1px;line-height:24.1px;color:#ccccdc;font-weight:normal;white-space:nowrap;left:1086.42px;width:800px;text-align:center">06:<span style="margin:0 -2.25px">1</span>0</div>
<div class="r" style="position:absolute;top:1308.42px;font-size:24.1px;line-height:24.1px;color:#ccccdc;font-weight:normal;white-space:nowrap;left:1189.26px;width:800px;text-align:center">06:20</div>
<div class="r" style="position:absolute;top:1308.42px;font-size:24.1px;line-height:24.1px;color:#ccccdc;font-weight:normal;white-space:nowrap;left:1292.10px;width:800px;text-align:center">06:30</div>
<div class="r" style="position:absolute;top:1308.42px;font-size:24.1px;line-height:24.1px;color:#ccccdc;font-weight:normal;white-space:nowrap;left:1394.94px;width:800px;text-align:center">06:40</div>
<div class="r" style="position:absolute;top:1308.42px;font-size:24.1px;line-height:24.1px;color:#ccccdc;font-weight:normal;white-space:nowrap;left:1497.78px;width:800px;text-align:center">06:50</div>
<svg style="position:absolute;left:0px;top:0px;overflow:visible;pointer-events:none" width="2968" height="1368" viewBox="0 0 2968 1368"><path d="M111 902.3 H1962" stroke="rgba(204,204,220,0.10)" stroke-width="1.3"/><path d="M111 981.0 H1962" stroke="rgba(204,204,220,0.10)" stroke-width="1.3"/><path d="M111 1059.8 H1962" stroke="rgba(204,204,220,0.10)" stroke-width="1.3"/><path d="M111 1138.5 H1962" stroke="rgba(204,204,220,0.10)" stroke-width="1.3"/><path d="M111 1217.3 H1962" stroke="rgba(204,204,220,0.10)" stroke-width="1.3"/><path d="M111 1296.0 H1962" stroke="rgba(204,204,220,0.10)" stroke-width="1.3"/><path d="M149.5 902 V1303" stroke="rgba(204,204,220,0.10)" stroke-width="1.3"/><path d="M252.3 902 V1303" stroke="rgba(204,204,220,0.10)" stroke-width="1.3"/><path d="M355.2 902 V1303" stroke="rgba(204,204,220,0.10)" stroke-width="1.3"/><path d="M458.0 902 V1303" stroke="rgba(204,204,220,0.10)" stroke-width="1.3"/><path d="M560.9 902 V1303" stroke="rgba(204,204,220,0.10)" stroke-width="1.3"/><path d="M663.7 902 V1303" stroke="rgba(204,204,220,0.10)" stroke-width="1.3"/><path d="M766.5 902 V1303" stroke="rgba(204,204,220,0.10)" stroke-width="1.3"/><path d="M869.4 902 V1303" stroke="rgba(204,204,220,0.10)" stroke-width="1.3"/><path d="M972.2 902 V1303" stroke="rgba(204,204,220,0.10)" stroke-width="1.3"/><path d="M1075.1 902 V1303" stroke="rgba(204,204,220,0.10)" stroke-width="1.3"/><path d="M1177.9 902 V1303" stroke="rgba(204,204,220,0.10)" stroke-width="1.3"/><path d="M1280.7 902 V1303" stroke="rgba(204,204,220,0.10)" stroke-width="1.3"/><path d="M1383.6 902 V1303" stroke="rgba(204,204,220,0.10)" stroke-width="1.3"/><path d="M1486.4 902 V1303" stroke="rgba(204,204,220,0.10)" stroke-width="1.3"/><path d="M1589.3 902 V1303" stroke="rgba(204,204,220,0.10)" stroke-width="1.3"/><path d="M1692.1 902 V1303" stroke="rgba(204,204,220,0.10)" stroke-width="1.3"/><path d="M1794.9 902 V1303" stroke="rgba(204,204,220,0.10)" stroke-width="1.3"/><path d="M1897.8 902 V1303" stroke="rgba(204,204,220,0.10)" stroke-width="1.3"/><polyline points="111.0,1295.3 826.0,1295.3 829.0,1293.6 835.0,1293.6 838.0,1295.3 1164.0,1295.3 1167.0,1293.8 1173.0,1293.8 1176.0,1295.3 1962.0,1295.3" fill="none" stroke="#eccd47" stroke-width="3.8" stroke-linejoin="round"/><polyline points="111.0,1291.8 118.1,1291.8 121.1,1290.9 127.1,1290.9 130.1,1293.7 136.4,1293.7 139.4,1293.7 145.3,1293.7 148.3,1293.7 156.3,1293.7 159.3,1290.9 170.3,1290.9 173.3,1290.9 181.7,1290.9 184.7,1293.7 195.6,1293.7 198.6,1293.7 205.4,1293.7 208.4,1291.6 222.2,1291.6 225.2,1293.7 243.5,1293.7 246.5,1293.7 259.7,1293.7 262.7,1290.9 281.3,1290.9 284.3,1290.9 297.1,1290.9 300.1,1291.6 309.2,1291.6 312.2,1291.6 318.0,1291.6 321.0,1284.5 324.0,1283.7 340.4,1283.7 343.4,1283.5 349.9,1283.5 352.9,1285.8 366.8,1285.8 369.8,1284.3 376.2,1284.3 379.2,1282.8 392.1,1282.8 395.1,1285.8 403.0,1285.8 406.0,1285.8 416.9,1285.8 419.9,1284.3 431.5,1284.3 434.5,1285.0 444.5,1285.0 447.5,1283.5 463.7,1283.5 466.7,1283.5 472.8,1283.5 475.8,1284.3 488.1,1284.3 491.1,1284.3 506.4,1284.3 509.4,1284.3 522.9,1284.3 525.9,1282.8 532.5,1282.8 535.5,1285.0 542.8,1285.0 545.8,1284.3 553.0,1284.3 556.0,1285.0 566.9,1285.0 569.9,1282.8 585.6,1282.8 588.6,1285.8 604.6,1285.8 607.6,1284.3 617.4,1284.3 620.4,1284.3 633.7,1284.3 636.7,1285.8 652.9,1285.8 655.9,1282.8 672.6,1282.8 675.6,1284.3 687.3,1284.3 690.3,1282.8 696.1,1282.8 699.1,1284.3 713.2,1284.3 716.2,1285.0 725.2,1285.0 728.2,1285.0 745.6,1285.0 748.6,1284.3 753.9,1284.3 756.9,1285.0 766.9,1285.0 769.9,1285.8 776.5,1285.8 779.5,1282.8 787.6,1282.8 790.6,1284.3 797.4,1284.3 800.4,1283.5 810.9,1283.5 813.9,1285.0 820.1,1285.0 823.1,1285.0 833.7,1285.0 836.7,1284.3 854.1,1284.3 857.1,1285.0 874.2,1285.0 877.2,1284.3 892.1,1284.3 895.1,1284.3 909.6,1284.3 912.6,1285.0 931.0,1285.0 934.0,1283.5 940.2,1283.5 943.2,1283.5 951.4,1283.5 954.4,1283.5 959.6,1283.5 962.6,1285.8 970.1,1285.8 973.1,1284.3 978.2,1284.3 981.2,1285.0 993.7,1285.0 996.7,1285.8 1009.6,1285.8 1012.6,1283.5 1027.3,1283.5 1030.3,1285.8 1048.6,1285.8 1051.6,1282.8 1063.0,1282.8 1066.0,1285.8 1076.5,1285.8 1079.5,1285.0 1090.0,1285.0 1093.0,1285.0 1106.9,1285.0 1109.9,1282.8 1117.5,1282.8 1120.5,1283.5 1131.7,1283.5 1134.7,1282.8 1144.5,1282.8 1147.5,1282.8 1153.9,1282.8 1156.9,1285.8 1164.0,1285.8 1167.0,1282.8 1185.3,1282.8 1188.3,1285.8 1193.7,1285.8 1196.7,1283.5 1210.3,1283.5 1213.3,1283.5 1227.1,1283.5 1230.1,1284.3 1243.6,1284.3 1246.6,1285.0 1253.3,1285.0 1256.3,1285.0 1275.2,1285.0 1278.2,1285.0 1289.9,1285.0 1292.9,1284.3 1299.1,1284.3 1302.1,1282.8 1317.6,1282.8 1320.6,1284.3 1332.3,1284.3 1335.3,1283.5 1347.6,1283.5 1350.6,1283.5 1368.9,1283.5 1371.9,1285.8 1381.9,1285.8 1384.9,1285.8 1402.7,1285.8 1405.7,1285.8 1414.9,1285.8 1417.9,1282.8 1432.6,1282.8 1435.6,1284.3 1447.9,1284.3 1450.9,1283.5 1460.9,1283.5 1463.9,1283.5 1476.3,1283.5 1479.3,1285.8 1489.0,1285.8 1492.0,1283.5 1505.5,1283.5 1508.5,1283.5 1524.8,1283.5 1527.8,1285.0 1543.2,1285.0 1546.2,1283.5 1554.0,1283.5 1557.0,1285.0 1567.0,1285.0 1570.0,1282.8 1588.8,1282.8 1591.8,1284.3 1603.4,1284.3 1606.4,1283.5 1621.1,1283.5 1624.1,1284.3 1635.4,1284.3 1638.4,1284.3 1656.8,1284.3 1659.8,1284.3 1665.9,1284.3 1668.9,1282.8 1677.1,1282.8 1680.1,1283.5 1689.8,1283.5 1692.8,1285.0 1706.5,1285.0 1709.5,1285.8 1726.3,1285.8 1729.3,1285.0 1747.0,1285.0 1750.0,1284.3 1766.2,1284.3 1769.2,1282.8 1785.9,1282.8 1788.9,1282.8 1806.6,1282.8 1809.6,1283.5 1821.3,1283.5 1824.3,1283.5 1835.4,1283.5 1838.4,1284.3 1844.6,1284.3 1847.6,1285.0 1859.1,1285.0 1862.1,1282.8 1877.2,1282.8 1880.2,1283.5 1899.2,1283.5 1902.2,1282.8 1909.3,1282.8 1912.3,1285.0 1928.6,1285.0 1931.6,1283.5 1945.1,1283.5 1948.1,1285.8 1962.0,1285.8" fill="none" stroke="#ee8033" stroke-width="3.8" stroke-linejoin="round"/><polyline points="223.0,1296.0 226.0,1281.0 229.0,1280.8 241.7,1280.8 244.7,1280.3 249.9,1280.3 252.9,1283.5 265.2,1283.5 268.2,1284.2 279.3,1284.2 282.3,1284.2 298.9,1284.2 301.9,1284.2 307.3,1284.2 310.3,1284.2 319.4,1284.2 322.4,1284.2 338.1,1284.2 341.1,1285.0 349.7,1285.0 352.7,1285.8 369.4,1285.8 372.4,1283.5 390.1,1283.5 393.1,1285.0 410.7,1285.0 413.7,1286.5 430.1,1286.5 433.1,1286.5 444.0,1286.5 447.0,1286.5 453.8,1286.5 456.8,1284.2 469.1,1284.2 472.1,1283.5 489.4,1283.5 492.4,1284.2 505.9,1284.2 508.9,1284.2 516.3,1284.2 519.3,1285.8 533.0,1285.8 536.0,1283.5 548.8,1283.5 551.8,1285.0 566.3,1285.0 569.3,1286.5 582.1,1286.5 585.1,1283.5 602.5,1283.5 605.5,1283.5 613.9,1283.5 616.9,1285.0 622.5,1285.0 625.5,1283.5 637.6,1283.5 640.6,1286.5 646.0,1286.5 649.0,1283.5 660.2,1283.5 663.2,1286.5 681.9,1286.5 684.9,1286.5 697.0,1286.5 700.0,1285.0 711.4,1285.0 714.4,1286.5 730.7,1286.5 733.7,1286.5 751.8,1286.5 754.8,1286.5 772.1,1286.5 775.1,1285.0 793.0,1285.0 796.0,1284.2 812.8,1284.2 815.8,1284.2 826.6,1284.2 829.6,1285.8 840.8,1285.8 843.8,1283.5 858.2,1283.5 861.2,1285.8 867.2,1285.8 870.2,1285.0 886.2,1285.0 889.2,1284.2 907.4,1284.2 910.4,1285.0 917.4,1285.0 920.4,1284.2 938.9,1284.2 941.9,1284.2 957.4,1284.2 960.4,1283.5 970.9,1283.5 973.9,1285.8 981.2,1285.8 984.2,1284.2 991.5,1284.2 994.5,1285.8 1013.4,1285.8 1016.4,1285.8 1026.1,1285.8 1029.1,1284.2 1039.1,1284.2 1042.1,1283.5 1057.2,1283.5 1060.2,1283.5 1070.0,1283.5 1073.0,1285.8 1084.1,1285.8 1087.1,1283.5 1097.5,1283.5 1100.5,1286.5 1114.3,1286.5 1117.3,1286.5 1135.7,1286.5 1138.7,1283.5 1157.5,1283.5 1160.5,1284.2 1179.1,1284.2 1182.1,1283.5 1188.3,1283.5 1191.3,1285.0 1196.8,1285.0 1199.8,1284.2 1208.6,1284.2 1211.6,1284.2 1228.1,1284.2 1231.1,1285.0 1241.8,1285.0 1244.8,1286.5 1262.7,1286.5 1265.7,1286.5 1277.6,1286.5 1280.6,1285.0 1286.8,1285.0 1289.8,1283.5 1306.0,1283.5 1309.0,1284.2 1320.0,1284.2 1323.0,1283.5 1331.7,1283.5 1334.7,1283.5 1348.6,1283.5 1351.6,1285.0 1357.8,1285.0 1360.8,1284.2 1366.7,1284.2 1369.7,1283.5 1381.1,1283.5 1384.1,1285.0 1403.0,1285.0 1406.0,1285.8 1424.0,1285.8 1427.0,1285.0 1440.7,1285.0 1443.7,1283.5 1456.1,1283.5 1459.1,1284.2 1477.2,1284.2 1480.2,1284.2 1488.9,1284.2 1491.9,1284.2 1499.7,1284.2 1502.7,1285.0 1516.5,1285.0 1519.5,1286.5 1535.1,1286.5 1538.1,1285.0 1549.4,1285.0 1552.4,1284.2 1561.1,1284.2 1564.1,1283.5 1583.1,1283.5 1586.1,1283.5 1591.3,1283.5 1594.3,1286.5 1607.0,1286.5 1610.0,1284.2 1622.2,1284.2 1625.2,1284.2 1643.3,1284.2 1646.3,1283.5 1660.5,1283.5 1663.5,1285.8 1677.7,1285.8 1680.7,1286.5 1697.4,1286.5 1700.4,1285.8 1719.0,1285.8 1722.0,1285.0 1736.6,1285.0 1739.6,1284.2 1749.4,1284.2 1752.4,1284.2 1763.0,1284.2 1766.0,1285.0 1784.8,1285.0 1787.8,1284.2 1793.0,1284.2 1796.0,1285.0 1807.0,1285.0 1810.0,1283.5 1816.2,1283.5 1819.2,1285.8 1836.4,1285.8 1839.4,1285.0 1852.8,1285.0 1855.8,1285.0 1861.4,1285.0 1864.4,1284.2 1871.6,1284.2 1874.6,1285.8 1879.7,1285.8 1882.7,1285.0 1901.1,1285.0 1904.1,1286.5 1913.7,1286.5 1916.7,1283.5 1935.2,1283.5 1938.2,1285.0 1946.2,1285.0 1949.2,1284.2 1954.2,1284.2 1957.2,1285.8 1962.0,1285.8" fill="none" stroke="#e05660" stroke-width="3.8" stroke-linejoin="round"/><polyline points="111.0,1253.0 117.2,1253.0 120.2,1255.0 132.7,1255.0 135.7,1250.9 142.7,1250.9 145.7,1250.8 151.2,1250.8 154.2,1254.8 158.7,1254.8 161.7,1250.8 169.0,1250.8 172.0,1251.7 176.9,1251.7 179.9,1254.7 193.3,1254.7 196.3,1251.6 207.5,1251.6 210.5,1254.5 218.8,1254.5 221.8,1252.5 233.8,1252.5 236.8,1253.4 242.4,1253.4 245.4,1254.4 256.5,1254.4 259.5,1250.3 272.5,1250.3 275.5,1254.2 286.4,1254.2 289.4,1254.2 295.0,1254.2 298.0,1254.1 310.3,1254.1 313.3,1254.1 326.4,1254.1 329.4,1250.0 342.5,1250.0 345.5,1253.9 358.3,1253.9 361.3,1250.7 366.2,1250.7 369.2,1249.7 374.7,1249.7 377.7,1251.6 392.3,1251.6 395.3,1252.4 408.5,1252.4 411.5,1253.3 416.0,1253.3 419.0,1249.2 429.9,1249.2 432.9,1250.1 442.3,1250.1 445.3,1249.0 454.3,1249.0 457.3,1248.9 469.5,1248.9 472.5,1252.7 486.4,1252.7 489.4,1248.6 500.7,1248.6 503.7,1248.4 515.9,1248.4 518.9,1251.1 525.7,1251.1 528.7,1247.9 542.0,1247.9 545.0,1248.6 557.0,1248.6 560.0,1248.3 566.5,1248.3 569.5,1250.1 579.0,1250.1 582.0,1249.9 586.8,1249.9 589.8,1248.7 602.2,1248.7 605.2,1250.4 616.2,1250.4 619.2,1247.1 624.0,1247.1 627.0,1247.0 634.7,1247.0 637.7,1247.7 648.5,1247.7 651.5,1246.5 655.7,1246.5 658.7,1245.3 668.0,1245.3 671.0,1245.1 682.6,1245.1 685.6,1247.8 692.8,1247.8 695.8,1248.6 703.0,1248.6 706.0,1247.4 715.1,1247.4 718.1,1244.1 733.0,1244.1 736.0,1247.8 742.2,1247.8 745.2,1243.6 759.5,1243.6 762.5,1243.2 769.7,1243.2 772.7,1243.0 785.7,1243.0 788.7,1245.7 803.7,1245.7 806.7,1245.4 813.0,1245.4 816.0,1243.3 820.8,1243.3 823.8,1242.1 829.3,1242.1 832.3,1246.0 839.2,1246.0 842.2,1243.9 847.7,1243.9 850.7,1245.7 857.8,1245.7 860.8,1241.6 872.5,1241.6 875.5,1242.4 885.0,1242.4 888.0,1244.2 896.3,1244.2 899.3,1242.0 903.3,1242.0 906.3,1243.9 917.8,1243.9 920.8,1243.7 928.2,1243.7 931.2,1241.5 939.7,1241.5 942.7,1243.4 950.2,1243.4 953.2,1242.2 957.2,1242.2 960.2,1242.1 973.5,1242.1 976.5,1239.9 990.8,1239.9 993.8,1240.6 1005.6,1240.6 1008.6,1241.5 1015.4,1241.5 1018.4,1239.4 1026.8,1239.4 1029.8,1243.4 1034.6,1243.4 1037.6,1242.3 1049.9,1242.3 1052.9,1239.3 1060.0,1239.3 1063.0,1239.2 1076.2,1239.2 1079.2,1241.2 1090.2,1241.2 1093.2,1240.1 1099.9,1240.1 1102.9,1241.1 1111.7,1241.1 1114.7,1241.0 1120.8,1241.0 1123.8,1241.0 1136.4,1241.0 1139.4,1241.9 1153.2,1241.9 1156.2,1241.8 1170.2,1241.8 1173.2,1242.7 1183.2,1242.7 1186.2,1238.7 1190.8,1238.7 1193.8,1241.7 1202.7,1241.7 1205.7,1239.6 1216.8,1239.6 1219.8,1240.5 1229.2,1240.5 1232.2,1242.5 1237.6,1242.5 1240.6,1241.5 1249.1,1241.5 1252.1,1240.4 1259.4,1240.4 1262.4,1240.4 1270.9,1240.4 1273.9,1239.3 1281.2,1239.3 1284.2,1242.3 1295.6,1242.3 1298.6,1238.2 1304.4,1238.2 1307.4,1239.2 1312.2,1239.2 1315.2,1242.2 1329.2,1242.2 1332.2,1241.2 1342.2,1241.2 1345.2,1241.2 1359.2,1241.2 1362.2,1241.2 1370.9,1241.2 1373.9,1242.2 1380.0,1242.2 1383.0,1238.2 1388.9,1238.2 1391.9,1242.2 1396.9,1242.2 1399.9,1239.2 1408.0,1239.2 1411.0,1242.3 1417.2,1242.3 1420.2,1238.3 1432.5,1238.3 1435.5,1241.3 1443.7,1241.3 1446.7,1242.3 1453.0,1242.3 1456.0,1240.3 1463.7,1240.3 1466.7,1238.3 1476.2,1238.3 1479.2,1242.3 1493.8,1242.3 1496.8,1239.3 1508.4,1239.3 1511.4,1242.3 1522.3,1242.3 1525.3,1239.3 1530.3,1239.3 1533.3,1239.3 1541.6,1239.3 1544.6,1241.3 1553.3,1241.3 1556.3,1240.3 1569.6,1240.3 1572.6,1238.3 1578.0,1238.3 1581.0,1241.3 1592.9,1241.3 1595.9,1241.3 1610.5,1241.3 1613.5,1241.3 1617.5,1241.3 1620.5,1241.3 1634.7,1241.3 1637.7,1242.4 1651.1,1242.4 1654.1,1241.4 1660.9,1241.4 1663.9,1238.4 1670.3,1238.4 1673.3,1239.4 1683.1,1239.4 1686.1,1238.4 1700.4,1238.4 1703.4,1241.4 1708.4,1241.4 1711.4,1238.4 1715.4,1238.4 1718.4,1239.4 1725.0,1239.4 1728.0,1238.4 1739.1,1238.4 1742.1,1240.4 1756.6,1240.4 1759.6,1240.4 1769.5,1240.4 1772.5,1241.4 1784.1,1241.4 1787.1,1238.4 1792.2,1238.4 1795.2,1240.4 1805.0,1240.4 1808.0,1242.4 1814.1,1242.4 1817.1,1240.4 1823.6,1240.4 1826.6,1242.4 1830.6,1242.4 1833.6,1242.4 1840.9,1242.4 1843.9,1241.4 1851.0,1241.4 1854.0,1240.5 1865.1,1240.5 1868.1,1239.5 1877.3,1239.5 1880.3,1239.5 1890.3,1239.5 1893.3,1238.5 1907.9,1238.5 1910.9,1240.5 1915.5,1240.5 1918.5,1239.5 1928.0,1239.5 1931.0,1241.5 1935.8,1241.5 1938.8,1239.5 1950.2,1239.5 1953.2,1240.5 1962.0,1240.5" fill="none" stroke="#94b7f9" stroke-width="3.8" stroke-linejoin="round"/></svg>
<div style="position:absolute;top:897.23px;font-size:22.2px;line-height:22.2px;color:#799ef8;font-weight:bold;white-space:nowrap;left:2031.50px">Name</div>
<div style="position:absolute;top:897.23px;font-size:22.2px;line-height:22.2px;color:#799ef8;font-weight:bold;white-space:nowrap;right:209.00px;text-align:right">Max</div>
<div style="position:absolute;top:897.23px;font-size:22.2px;line-height:22.2px;color:#799ef8;font-weight:bold;white-space:nowrap;right:75.60px;text-align:right">Last *</div>
<div style="position:absolute;left:1977px;top:929px;width:932px;height:1px;background:rgba(204,204,220,0.12)"></div>
<div style="position:absolute;left:1991px;top:947.2px;width:26px;height:8.4px;background:#85bd72;border-radius:4px"></div>
<div class="r" style="position:absolute;top:938.80px;font-size:24px;line-height:24px;color:#ccccdc;font-weight:normal;white-space:nowrap;left:2031.50px">{pod="mz<span style="letter-spacing:2.2px">0</span>tcmxlswtg<span style="margin:0 3.4px">-</span>balancerd<span style="margin:0 3.4px">-</span><span style="letter-spacing:2.2px">679777</span>cf<span style="letter-spacing:2.2px">47</span><span style="margin:0 3.4px">-</span>hrwdv"}</div>
<div style="position:absolute;left:1977px;top:972.4000000000001px;width:932px;height:1px;background:rgba(204,204,220,0.12)"></div>
<div style="position:absolute;left:1991px;top:989.7px;width:26px;height:8.4px;background:#eccd47;border-radius:4px"></div>
<div class="r" style="position:absolute;top:981.30px;font-size:24px;line-height:24px;color:#ccccdc;font-weight:normal;white-space:nowrap;left:2031.50px">{pod="mz<span style="letter-spacing:2.2px">0</span>tcmxlswtg<span style="margin:0 3.4px">-</span>cluster<span style="margin:0 3.4px">-</span>s<span style="letter-spacing:2.2px">1</span><span style="margin:0 3.4px">-</span>replica<span style="margin:0 3.4px">-</span>s<span style="letter-spacing:2.2px">2</span><span style="margin:0 3.4px">-</span>gen<span style="margin:0 3.4px">-</span><span style="letter-spacing:2.2px">1</span><span style="margin:0 3.4px">-</span><span style="letter-spacing:2.2px">0</span>"}</div>
<div class="r" style="position:absolute;top:981.30px;font-size:24px;line-height:24px;color:#ccccdc;font-weight:normal;white-space:nowrap;right:209.00px;text-align:right">0.673%</div>
<div class="r" style="position:absolute;top:981.30px;font-size:24px;line-height:24px;color:#ccccdc;font-weight:normal;white-space:nowrap;right:75.60px;text-align:right">0.605%</div>
<div style="position:absolute;left:1977px;top:1014.9000000000001px;width:932px;height:1px;background:rgba(204,204,220,0.12)"></div>
<div style="position:absolute;left:1991px;top:1032.2px;width:26px;height:8.4px;background:#94b7f9;border-radius:4px"></div>
<div class="r" style="position:absolute;top:1023.80px;font-size:24px;line-height:24px;color:#ccccdc;font-weight:normal;white-space:nowrap;left:2031.50px">{pod="mz<span style="letter-spacing:2.2px">0</span>tcmxlswtg<span style="margin:0 3.4px">-</span>cluster<span style="margin:0 3.4px">-</span>s<span style="letter-spacing:2.2px">2</span><span style="margin:0 3.4px">-</span>replica<span style="margin:0 3.4px">-</span>s<span style="letter-spacing:2.2px">1</span><span style="margin:0 3.4px">-</span>gen<span style="margin:0 3.4px">-</span><span style="letter-spacing:2.2px">1</span><span style="margin:0 3.4px">-</span><span style="letter-spacing:2.2px">0</span>"}</div>
<div class="r" style="position:absolute;top:1023.80px;font-size:24px;line-height:24px;color:#ccccdc;font-weight:normal;white-space:nowrap;right:209.00px;text-align:right">14.8%</div>
<div class="r" style="position:absolute;top:1023.80px;font-size:24px;line-height:24px;color:#ccccdc;font-weight:normal;white-space:nowrap;right:75.60px;text-align:right">14.3%</div>
<div style="position:absolute;left:1977px;top:1057.4px;width:932px;height:1px;background:rgba(204,204,220,0.12)"></div>
<div style="position:absolute;left:1991px;top:1074.7px;width:26px;height:8.4px;background:#ee8033;border-radius:4px"></div>
<div class="r" style="position:absolute;top:1066.30px;font-size:24px;line-height:24px;color:#ccccdc;font-weight:normal;white-space:nowrap;left:2031.50px">{pod="mz<span style="letter-spacing:2.2px">0</span>tcmxlswtg<span style="margin:0 3.4px">-</span>cluster<span style="margin:0 3.4px">-</span>u<span style="letter-spacing:2.2px">1</span><span style="margin:0 3.4px">-</span>replica<span style="margin:0 3.4px">-</span>u<span style="letter-spacing:2.2px">1</span><span style="margin:0 3.4px">-</span>gen<span style="margin:0 3.4px">-</span><span style="letter-spacing:2.2px">1</span><span style="margin:0 3.4px">-</span><span style="letter-spacing:2.2px">0</span>"}</div>
<div class="r" style="position:absolute;top:1066.30px;font-size:24px;line-height:24px;color:#ccccdc;font-weight:normal;white-space:nowrap;right:209.00px;text-align:right">3.75%</div>
<div class="r" style="position:absolute;top:1066.30px;font-size:24px;line-height:24px;color:#ccccdc;font-weight:normal;white-space:nowrap;right:75.60px;text-align:right">3.00%</div>
<div style="position:absolute;left:1977px;top:1099.9px;width:932px;height:1px;background:rgba(204,204,220,0.12)"></div>
<div style="position:absolute;left:1991px;top:1117.2px;width:26px;height:8.4px;background:#e05660;border-radius:4px"></div>
<div class="r" style="position:absolute;top:1108.80px;font-size:24px;line-height:24px;color:#ccccdc;font-weight:normal;white-space:nowrap;left:2031.50px">{pod="mz<span style="letter-spacing:2.2px">0</span>tcmxlswtg<span style="margin:0 3.4px">-</span>cluster<span style="margin:0 3.4px">-</span>u<span style="letter-spacing:2.2px">2</span><span style="margin:0 3.4px">-</span>replica<span style="margin:0 3.4px">-</span>u<span style="letter-spacing:2.2px">2</span><span style="margin:0 3.4px">-</span>gen<span style="margin:0 3.4px">-</span><span style="letter-spacing:2.2px">1</span><span style="margin:0 3.4px">-</span><span style="letter-spacing:2.2px">0</span>"}</div>
<div class="r" style="position:absolute;top:1108.80px;font-size:24px;line-height:24px;color:#ccccdc;font-weight:normal;white-space:nowrap;right:209.00px;text-align:right">4.00%</div>
<div class="r" style="position:absolute;top:1108.80px;font-size:24px;line-height:24px;color:#ccccdc;font-weight:normal;white-space:nowrap;right:75.60px;text-align:right">2.83%</div>
<div style="position:absolute;left:1977px;top:1142.4px;width:932px;height:1px;background:rgba(204,204,220,0.12)"></div>
<div style="position:absolute;left:1991px;top:1159.7px;width:26px;height:8.4px;background:#6592eb;border-radius:4px"></div>
<div class="r" style="position:absolute;top:1151.30px;font-size:24px;line-height:24px;color:#ccccdc;font-weight:normal;white-space:nowrap;left:2031.50px">{pod="mz<span style="letter-spacing:2.2px">0</span>tcmxlswtg<span style="margin:0 3.4px">-</span>console<span style="margin:0 3.4px">-</span><span style="letter-spacing:2.2px">549</span>b<span style="letter-spacing:2.2px">5</span>db<span style="letter-spacing:2.2px">98</span>b<span style="margin:0 3.4px">-</span><span style="letter-spacing:2.2px">44</span>s<span style="letter-spacing:2.2px">7</span>g"}</div>
<div class="r" style="position:absolute;top:1151.30px;font-size:24px;line-height:24px;color:#ccccdc;font-weight:normal;white-space:nowrap;right:209.00px;text-align:right">∞%</div>
<div class="r" style="position:absolute;top:1151.30px;font-size:24px;line-height:24px;color:#ccccdc;font-weight:normal;white-space:nowrap;right:75.60px;text-align:right">∞%</div>
<div style="position:absolute;left:1977px;top:1184.9px;width:932px;height:1px;background:rgba(204,204,220,0.12)"></div>
<div style="position:absolute;left:1991px;top:1202.2px;width:26px;height:8.4px;background:#af7ad3;border-radius:4px"></div>
<div class="r" style="position:absolute;top:1193.80px;font-size:24px;line-height:24px;color:#ccccdc;font-weight:normal;white-space:nowrap;left:2031.50px">{pod="mz<span style="letter-spacing:2.2px">0</span>tcmxlswtg<span style="margin:0 3.4px">-</span>console<span style="margin:0 3.4px">-</span><span style="letter-spacing:2.2px">549</span>b<span style="letter-spacing:2.2px">5</span>db<span style="letter-spacing:2.2px">98</span>b<span style="margin:0 3.4px">-</span>vpkq<span style="letter-spacing:2.2px">2</span>"}</div>
<div class="r" style="position:absolute;top:1193.80px;font-size:24px;line-height:24px;color:#ccccdc;font-weight:normal;white-space:nowrap;right:209.00px;text-align:right">∞%</div>
<div class="r" style="position:absolute;top:1193.80px;font-size:24px;line-height:24px;color:#ccccdc;font-weight:normal;white-space:nowrap;right:75.60px;text-align:right">∞%</div>
<div style="position:absolute;left:1977px;top:1227.4px;width:932px;height:1px;background:rgba(204,204,220,0.12)"></div>
<div style="position:absolute;left:1991px;top:1244.7px;width:26px;height:8.4px;background:#6d5e9c;border-radius:4px"></div>
<div class="r" style="position:absolute;top:1236.30px;font-size:24px;line-height:24px;color:#ccccdc;font-weight:normal;white-space:nowrap;left:2031.50px">{pod="mz<span style="letter-spacing:2.2px">0</span>tcmxlswtg<span style="margin:0 3.4px">-</span>environmentd<span style="margin:0 3.4px">-</span><span style="letter-spacing:2.2px">1</span><span style="margin:0 3.4px">-</span><span style="letter-spacing:2.2px">0</span>"}</div>
<div class="r" style="position:absolute;top:1236.30px;font-size:24px;line-height:24px;color:#ccccdc;font-weight:normal;white-space:nowrap;right:209.00px;text-align:right">∞%</div>
<div class="r" style="position:absolute;top:1236.30px;font-size:24px;line-height:24px;color:#ccccdc;font-weight:normal;white-space:nowrap;right:75.60px;text-align:right">∞%</div>
<div style="position:absolute;left:1977px;top:1269.9px;width:932px;height:1px;background:rgba(204,204,220,0.12)"></div>
</div>
</body></html>
